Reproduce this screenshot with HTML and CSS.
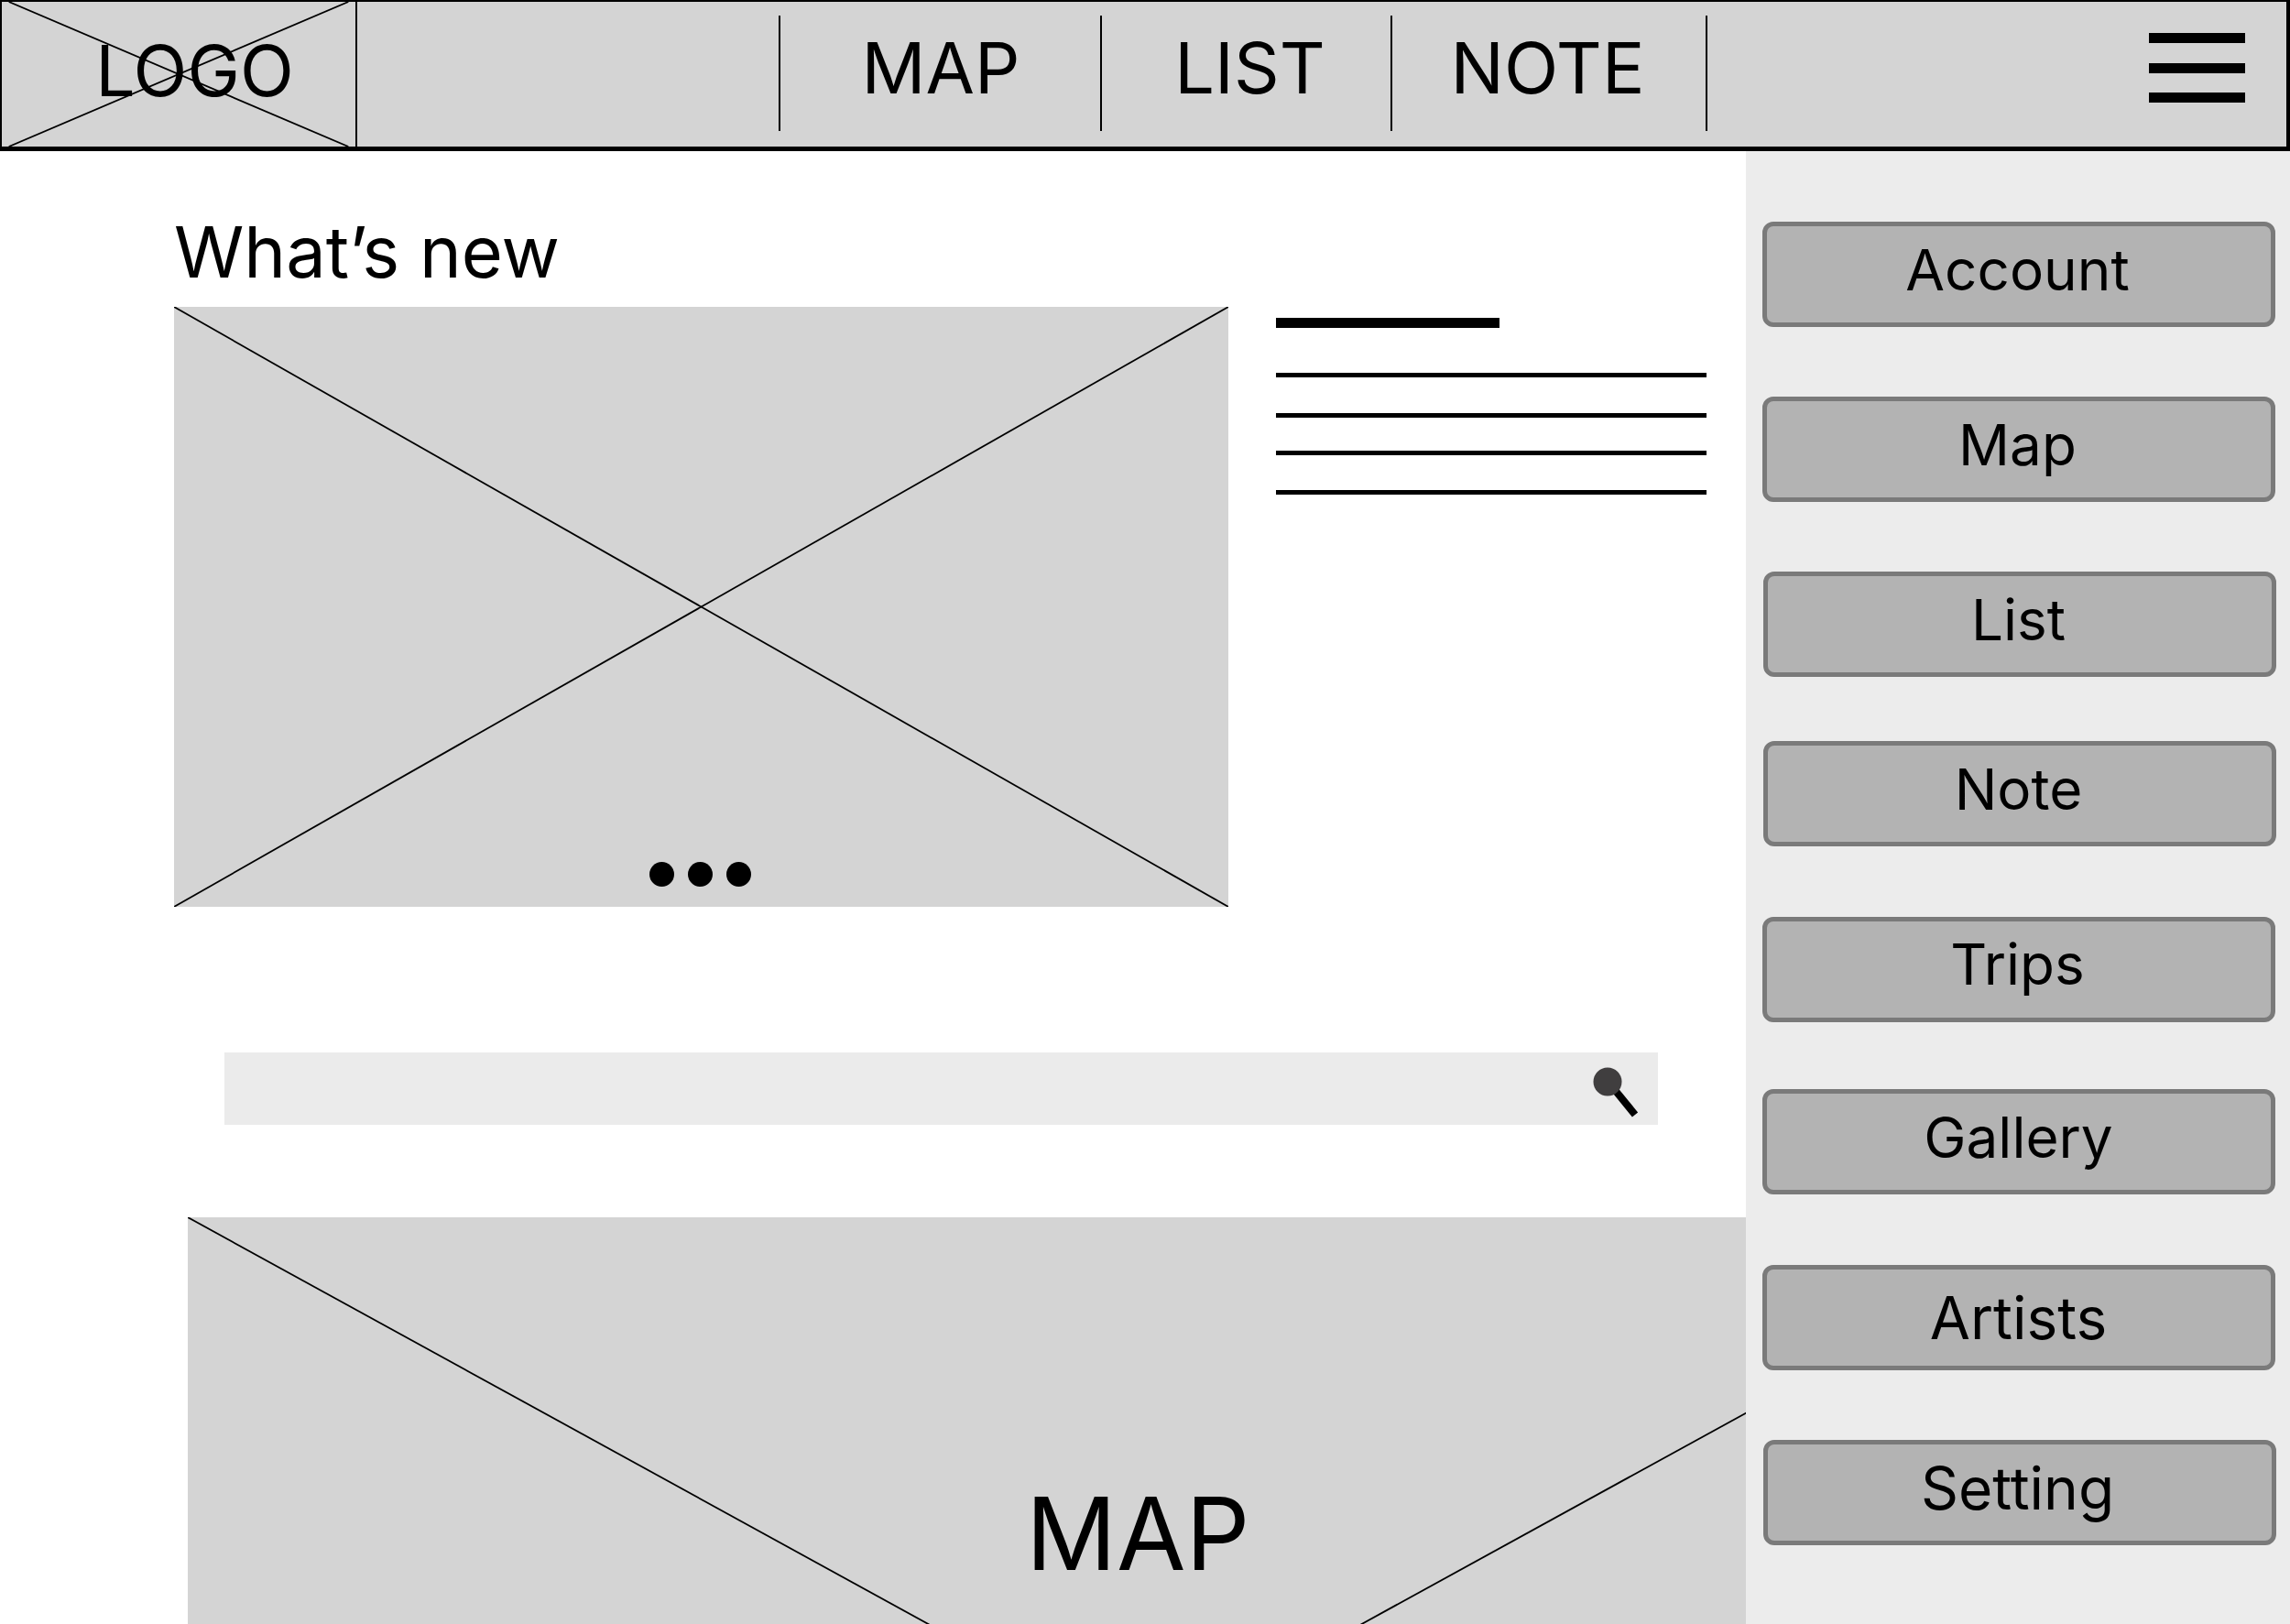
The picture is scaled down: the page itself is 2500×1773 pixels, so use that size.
FILE: index.html
```html
<!DOCTYPE html>
<html lang="en">
<head>
<meta charset="utf-8">
<title>Wireframe</title>
<link rel="stylesheet" href="styles.css">
</head>
<body>
<header class="nav">
  <div class="logo">
    <svg class="cross" viewBox="0 0 100 100" preserveAspectRatio="none"><line x1="2" y1="0" x2="98" y2="100"/><line x1="2" y1="100" x2="98" y2="0"/></svg>
    <span class="logo-text">LOGO</span>
  </div>
  <nav class="menu">
    <a class="menu-item item-map">MAP</a>
    <a class="menu-item item-list">LIST</a>
    <a class="menu-item item-note">NOTE</a>
  </nav>
  <div class="burger"><i></i><i></i><i></i></div>
</header>
<div class="page">
  <main class="content">
    <h1 class="title">What’s new</h1>
    <section class="news">
      <div class="hero">
        <svg class="cross" viewBox="0 0 100 100" preserveAspectRatio="none"><line x1="0" y1="0" x2="100" y2="100"/><line x1="0" y1="100" x2="100" y2="0"/></svg>
        <div class="dots"><b></b><b></b><b></b></div>
      </div>
      <div class="lines">
        <div class="line-head"></div>
        <div class="line line-1"></div>
        <div class="line line-2"></div>
        <div class="line line-3"></div>
        <div class="line line-4"></div>
      </div>
    </section>
    <div class="search">
      <svg class="search-icon" viewBox="0 0 50 56"><line x1="24" y1="25" x2="46" y2="52" class="handle"/><circle cx="16" cy="16" r="15.5" class="lens"/></svg>
    </div>
    <section class="map">
      <div class="map-canvas">
        <svg class="cross" viewBox="0 0 100 100" preserveAspectRatio="none"><line x1="0" y1="0" x2="100" y2="100"/><line x1="0" y1="100" x2="100" y2="0"/></svg>
        <span class="map-text">MAP</span>
      </div>
    </section>
  </main>
  <aside class="side">
    <a class="btn gap-76">Account</a>
    <a class="btn gap-76">Map</a>
    <a class="btn btn-shift gap-70">List</a>
    <a class="btn btn-shift gap-77">Note</a>
    <a class="btn btn-trips gap-73">Trips</a>
    <a class="btn btn-gallery gap-77">Gallery</a>
    <a class="btn btn-artists gap-76">Artists</a>
    <a class="btn btn-shift btn-setting">Setting</a>
  </aside>
</div>
</body>
</html>
```
FILE: styles.css
```css
* { box-sizing: border-box; }
html, body { margin: 0; height: 1773px; overflow: hidden; background: #fff; }
body { font-family: Inter, "Liberation Sans", sans-serif; color: #000; width: 2500px; }

.nav { height: 165px; display: flex; background: #d4d4d4; border: 2px solid #000; border-bottom-width: 5px; border-right-width: 4px; }
.logo { position: relative; width: 388px; border-right: 2px solid #000; display: flex; align-items: center; justify-content: center; }
.cross { position: absolute; inset: 0; width: 100%; height: 100%; }
.cross line { stroke: #000; stroke-width: 1.8px; vector-effect: non-scaling-stroke; }
.logo-text { position: relative; font-size: 77px; margin: -9px 0 0 35px; }
.menu { display: flex; margin-left: 460px; height: 126px; margin-top: 15px; border-left: 2px solid #000; font-size: 77.5px; }
.menu-item { display: flex; align-items: center; justify-content: center; border-right: 2px solid #000; padding-bottom: 12px; }
.item-map { width: 351px; padding-left: 1px; }
.item-list { width: 317px; padding-left: 8px; }
.item-note { width: 344px; padding-right: 3px; }
.burger { margin-left: auto; margin-right: 45px; margin-top: 34px; width: 105px; height: 76px; display: flex; flex-direction: column; justify-content: space-between; }
.burger i { display: block; height: 11px; background: #000; }

.page { display: flex; height: 1608px; }
.content { width: 1906px; flex: none; overflow: hidden; }
.title { margin: 55px 0 0 190px; font-size: 77.5px; font-weight: 400; line-height: 111px; height: 115px; }
.news { display: flex; margin-left: 190px; }
.hero { position: relative; width: 1151px; height: 655px; background: #d4d4d4; }
.dots { position: absolute; left: 519px; top: 606px; display: flex; gap: 15px; }
.dots b { display: block; width: 27px; height: 27px; border-radius: 50%; background: #000; }
.lines { margin-left: 52px; width: 470px; padding-top: 12px; }
.line-head { width: 244px; height: 11px; background: #000; }
.line { height: 5px; background: #000; }
.line-1 { margin-top: 49px; }
.line-2 { margin-top: 39px; }
.line-3 { margin-top: 36px; }
.line-4 { margin-top: 38px; }
.search { margin: 159px 0 0 245px; width: 1565px; height: 79px; background: #ebebeb; position: relative; }
.search-icon { position: absolute; left: 1494px; top: 16px; width: 50px; height: 56px; }
.handle { stroke: #000; stroke-width: 8px; }
.lens { fill: #403e3f; }
.map { margin: 101px 0 0 205px; height: 444px; overflow: hidden; background: #d4d4d4; }
.map-canvas { position: relative; width: 2090px; height: 1148px; }
.map-text { position: absolute; left: 915px; top: 277px; font-size: 109.5px; line-height: 136px; }

.side { flex: 1; background: #ececec; padding: 77px 16px 0 18px; }
.btn { display: flex; align-items: center; justify-content: center; height: 115px; background: #b3b3b3; border: 5px solid #7a7a7a; border-radius: 12px; font-size: 62px; padding: 0 3px 10px 0; }
.btn-shift { transform: translateX(1px); }
.btn-trips { padding-bottom: 12px; }
.btn-gallery { padding-left: 2px; }
.btn-artists { padding-bottom: 0; padding-right: 1px; font-size: 64px; }
.btn-setting { font-size: 64px; padding-right: 5px; }
.gap-70 { margin-bottom: 70px; }
.gap-73 { margin-bottom: 73px; }
.gap-76 { margin-bottom: 76px; }
.gap-77 { margin-bottom: 77px; }
```
